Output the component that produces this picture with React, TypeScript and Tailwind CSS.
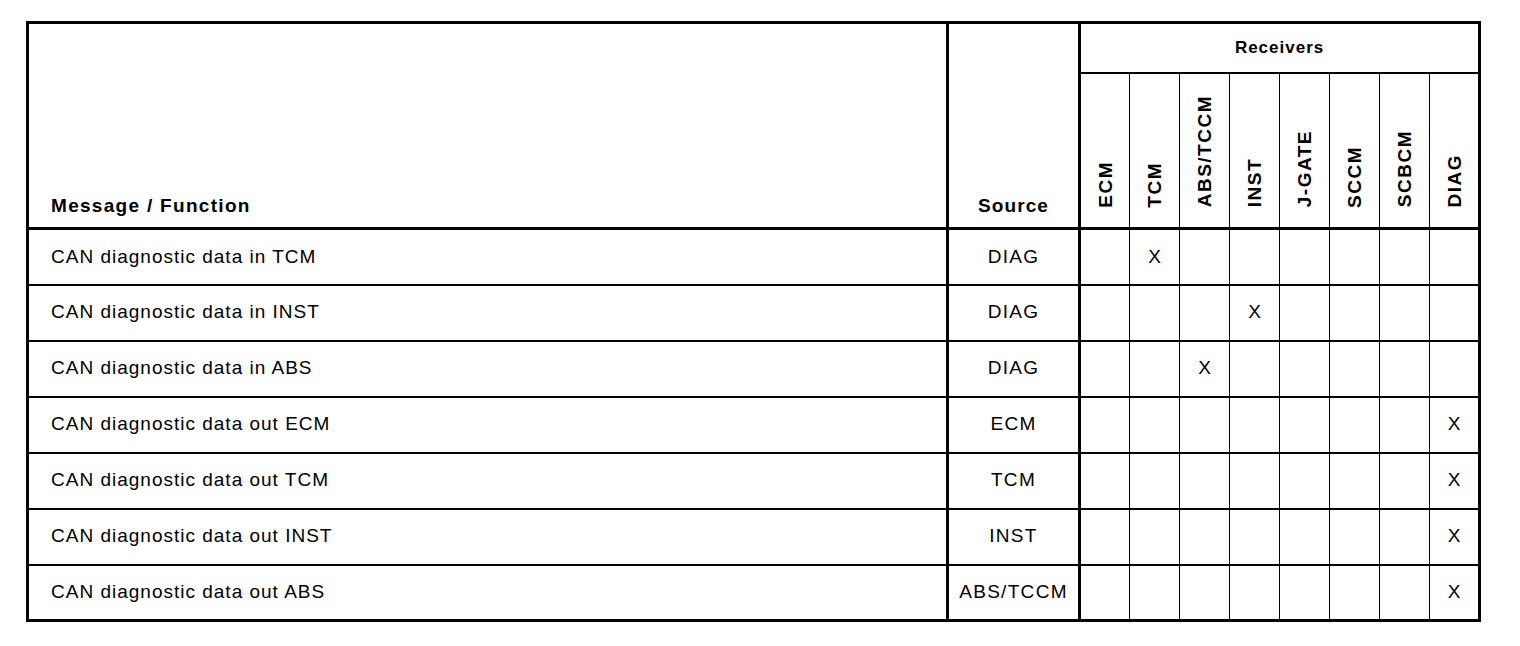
const receivers = ["ECM", "TCM", "ABS/TCCM", "INST", "J-GATE", "SCCM", "SCBCM", "DIAG"];

const rows = [
    { msg: "CAN diagnostic data in TCM", src: "DIAG", to: "TCM" },
    { msg: "CAN diagnostic data in INST", src: "DIAG", to: "INST" },
    { msg: "CAN diagnostic data in ABS", src: "DIAG", to: "ABS/TCCM" },
    { msg: "CAN diagnostic data out ECM", src: "ECM", to: "DIAG" },
    { msg: "CAN diagnostic data out TCM", src: "TCM", to: "DIAG" },
    { msg: "CAN diagnostic data out INST", src: "INST", to: "DIAG" },
    { msg: "CAN diagnostic data out ABS", src: "ABS/TCCM", to: "DIAG" },
];

export default function App() {
    return (
        <div className="min-h-screen bg-white pl-[26px] pt-[21px] text-black font-['Liberation_Sans',Arial,sans-serif]">
            <table className="table-fixed border-collapse border-[3px] border-black w-[1455px]">
                <colgroup>
                    <col className="w-[920px]" />
                    <col className="w-[132px]" />
                    {receivers.map((r) => (
                        <col key={r} className="w-[50px]" />
                    ))}
                </colgroup>
                <thead>
                    <tr className="h-[50px]">
                        <th
                            rowSpan={2}
                            className="border-r-[3px] border-b-[3px] border-black align-bottom text-left pl-[22px] pb-[7px] text-[19px] font-bold tracking-[1.3px]"
                        >
                            Message / Function
                        </th>
                        <th
                            rowSpan={2}
                            className="border-r-[3px] border-b-[3px] border-black align-bottom text-center pb-[7px] text-[19px] font-bold tracking-[1.1px]"
                        >
                            Source
                        </th>
                        <th colSpan={8} className="border-b-2 border-black text-center text-[17px] font-bold tracking-[1px]">
                            Receivers
                        </th>
                    </tr>
                    <tr className="h-[156px]">
                        {receivers.map((r, i) => (
                            <th
                                key={r}
                                className={`border-b-[3px] border-black align-bottom pb-[11px] text-[19px] font-bold tracking-[1.5px] ${i > 0 ? "border-l" : ""}`}
                            >
                                <span className="inline-block [writing-mode:vertical-rl] rotate-180 leading-none">{r}</span>
                            </th>
                        ))}
                    </tr>
                </thead>
                <tbody>
                    {rows.map((row, ri) => (
                        <tr key={row.msg} className={`h-[56px] ${ri < rows.length - 1 ? "border-b-2 border-black" : ""}`}>
                            <td className="border-r-[3px] border-black pl-[22px] text-[19px] tracking-[1px]">{row.msg}</td>
                            <td className="border-r-[3px] border-black text-center text-[19px] tracking-[1.3px]">{row.src}</td>
                            {receivers.map((r, i) => (
                                <td key={r} className={`text-center text-[19px] border-black ${i > 0 ? "border-l" : ""}`}>
                                    {row.to === r ? "X" : ""}
                                </td>
                            ))}
                        </tr>
                    ))}
                </tbody>
            </table>
        </div>
    );
}
